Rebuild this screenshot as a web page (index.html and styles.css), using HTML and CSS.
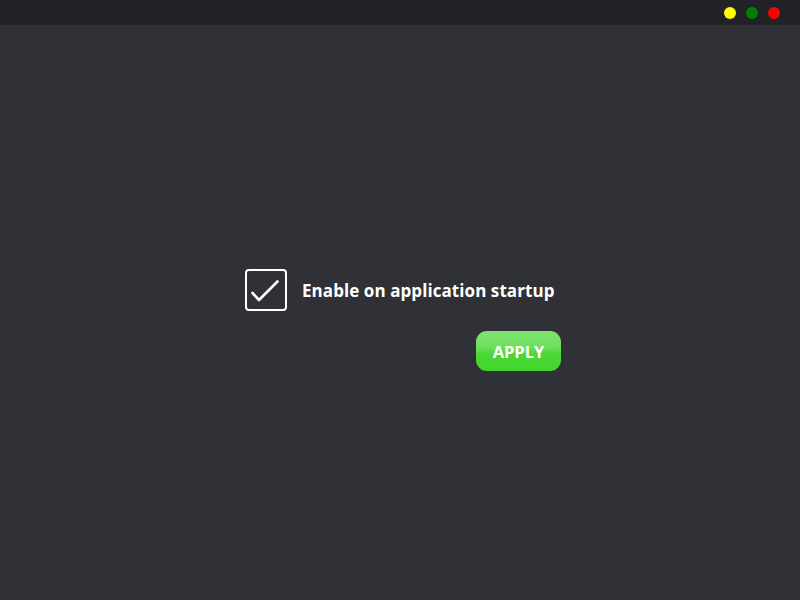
FILE: index.html
```html
<!DOCTYPE html>
<html>
<head>
<meta charset="utf-8">
<link rel="stylesheet" href="styles.css">
</head>
<body>
<header class="titlebar">
  <span class="dot dot-yellow"></span>
  <span class="dot dot-green"></span>
  <span class="dot dot-red"></span>
</header>
<main class="content">
  <div class="panel">
    <label class="option">
      <span class="checkbox">
        <svg width="42" height="42" viewBox="0 0 42 42"><path d="M7.5 24 L14 31 L32.5 12.5" fill="none" stroke="#fff" stroke-width="2.6" stroke-linecap="round" stroke-linejoin="round"/></svg>
      </span>
      <span class="option-text">Enable on application startup</span>
    </label>
    <div class="actions">
      <button class="apply">APPLY</button>
    </div>
  </div>
</main>
</body>
</html>
```
FILE: styles.css
```css
html, body {
  margin: 0;
  padding: 0;
  height: 100%;
}
body {
  background: #303136;
  font-family: "Open Sans", "DejaVu Sans", sans-serif;
  color: #fff;
  display: flex;
  flex-direction: column;
}
.titlebar {
  height: 25px;
  background: #212226;
  display: flex;
  align-items: center;
  justify-content: flex-end;
  gap: 10px;
  padding-right: 20px;
  box-sizing: border-box;
}
.dot {
  width: 12px;
  height: 12px;
  border-radius: 50%;
}
.dot-yellow { background: #ffff00; }
.dot-green { background: #008000; }
.dot-red { background: #ff0000; }
.content {
  flex: 1;
  padding-top: 244px;
  padding-left: 245px;
}
.panel {
  width: 316px;
  display: flex;
  flex-direction: column;
  gap: 20px;
}
.option {
  display: flex;
  align-items: center;
  gap: 15px;
}
.checkbox {
  width: 42px;
  height: 42px;
  box-sizing: border-box;
  border: 2px solid #fff;
  border-radius: 4px;
  position: relative;
}
.checkbox svg {
  position: absolute;
  left: -2px;
  top: -2px;
}
.option-text {
  font-size: 17px;
  font-weight: 700;
  letter-spacing: 0.07px;
}
.actions {
  display: flex;
  justify-content: flex-end;
}
.apply {
  width: 85px;
  height: 40px;
  border: none;
  border-radius: 11px;
  background: linear-gradient(to bottom, #80e470 0%, #6edf5c 40%, #4cd736 58%, #42d42c 100%);
  color: #fff;
  font-family: "Open Sans", "DejaVu Sans", sans-serif;
  font-size: 16.5px;
  font-weight: 700;
  padding: 0;
}
```
